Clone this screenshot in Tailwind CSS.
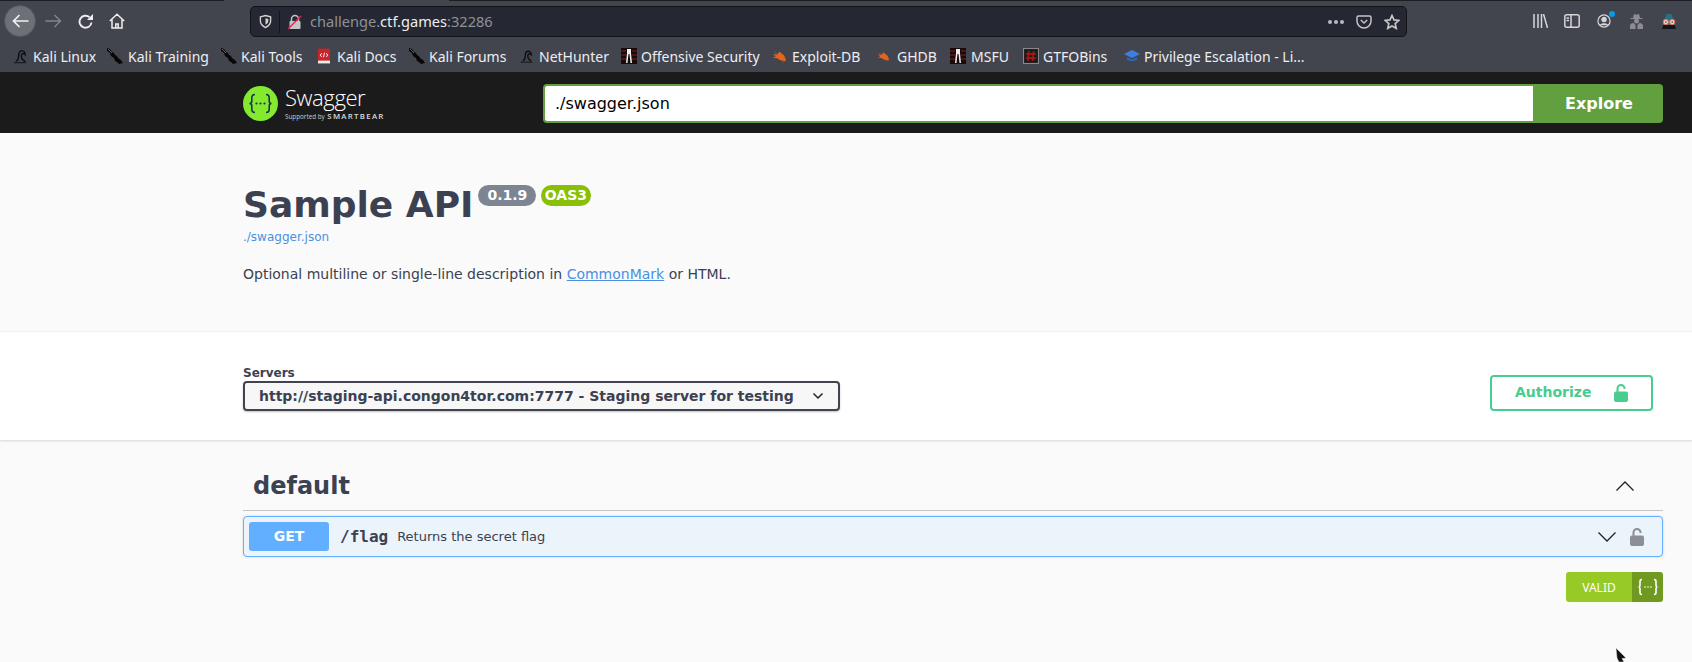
<!DOCTYPE html>
<html lang="en">
<head>
  <meta charset="UTF-8">
  <title>Swagger UI</title>
  <script src="https://cdn.jsdelivr.net/npm/@tailwindcss/browser@4"></script>
</head>
<body class="bg-[#fafafa] h-[662px] w-[1692px] overflow-hidden relative font-['DejaVu_Sans',sans-serif]">
  <svg class="hidden">
    <symbol id="knife" viewBox="0 0 16 16"><path d="M0 0l3 1 2 3 2 1 1 2 2 1 1 2 3 2 2 3-4 1-2-2-2-1-1-3-3-2-1-3-3-2z" fill="#070707"/><path d="M1 1l4 4" stroke="#8a8a8a" stroke-width=".7"/></symbol>
    <symbol id="dragon" viewBox="0 0 16 16"><path d="M3 13c2.500-1 3-3 3-5.500C6 4 7.500 2 9.500 2 11.500 2 13 4 13 6c-1-1-2.500-1.500-3.500-.5-1 1-.5 4 .5 5.500l3 2.500" fill="none" stroke="#0c0d10" stroke-width="1.500"/><path d="M1 14.500h13" stroke="#1c1d21" stroke-width="1.400"/></symbol>
    <symbol id="offsec" viewBox="0 0 16 16"><rect width="16" height="16" fill="#1a0b0b"/><path d="M0 3h5M0 7h5M0 11h5M11 3h5M11 7h5M11 11h5" stroke="#5a1d1d" stroke-width="1.500"/><path d="M6 1h4v4l1 10H9.500L8.500 6h-1l-1 9H5l1-10z" fill="#eee"/></symbol>
    <symbol id="bug" viewBox="0 0 16 16"><path d="M1 5l4 1 3-3 5 4 2 5-1 1-5-1-3-2-5-1 3-1z" fill="#e8621a"/><path d="M3 3l3 3M11 13l2 2" stroke="#b34c12" stroke-width="1"/></symbol>
    <symbol id="lock-open" viewBox="0 0 14 18"><path d="M3.500 9V4.500a3.500 3.500 0 0 1 7 0V5" fill="none" stroke="currentColor" stroke-width="2"/><rect y="7.500" width="14" height="10.500" rx="2" fill="currentColor"/></symbol>
  </svg>

  <!-- browser chrome -->
  <div class="h-[73px] bg-[#42454e] border-b border-[#18191d] flex flex-col">
    <div class="h-[42px] flex items-center relative">
      <div class="absolute top-0 left-0 h-px w-[224px] bg-[#1d1e22]"></div>
      <div class="absolute top-0 left-[449px] right-0 h-px bg-[#1d1e22]"></div>
      <div class="w-[250px] flex items-center shrink-0 h-full">
        <div class="ml-[4px] w-[32px] h-[32px] rounded-full bg-[#6e7077] border border-[#55575f] flex items-center justify-center">
          <svg width="17" height="14" viewBox="0 0 17 14" fill="none" stroke="#f1f1f3" stroke-width="1.700"><path d="M16.500 7H1.500M7.500 1L1.500 7l6 6"/></svg>
        </div>
        <svg class="ml-[9px]" width="17" height="14" viewBox="0 0 17 14" fill="none" stroke="#83858b" stroke-width="1.400"><path d="M.5 7h15M9.500 1l6 6-6 6"/></svg>
        <svg class="ml-[16px]" width="15" height="15" viewBox="0 0 15 15" fill="none" stroke="#eeeef0" stroke-width="1.900"><path d="M13.500 8.500a6 6 0 1 1-2-5.300"/><path d="M15 0v6H9z" fill="#eeeef0" stroke="none"/></svg>
        <svg class="ml-[16px]" width="16" height="16" viewBox="0 0 16 16" fill="none" stroke="#eeeef0" stroke-width="1.500"><path d="M.8 8L8 1.200 15.200 8M3 6.500V15h10V6.500M6.800 15v-4h2.400v4"/></svg>
      </div>
      <div class="w-[1157px] h-[31px] mt-[1px] bg-[#252832] border border-[#121317] rounded-[5px] flex items-center shrink-0">
        <svg class="ml-[8px]" width="13" height="15" viewBox="0 0 14 15" fill="none" stroke="#d2d2d6" stroke-width="1.500"><path d="M1.500 2.500L7 1l5.500 1.500V7c0 3.500-2.500 5.500-5.500 7-3-1.500-5.500-3.500-5.500-7z"/><path d="M7 4l3 .8V7c0 1.800-1.200 3-3 4z" fill="#d2d2d6" stroke="none"/></svg>
        <div class="ml-[7px] w-px h-[22px] bg-[#14151a]"></div>
        <svg class="ml-[8px]" width="14" height="16" viewBox="0 0 14 16"><path d="M3.500 7V5a3.500 3.500 0 0 1 7 0v2" fill="none" stroke="#c5c5c9" stroke-width="1.500"/><rect x="1.500" y="7" width="11" height="8" rx="1" fill="#c5c5c9"/><path d="M0 15L13 2" stroke="#e22850" stroke-width="1.500"/></svg>
        <div class="ml-[8px] font-['Noto_Sans',sans-serif] text-[14.600px] text-[#8f9197] flex-1 leading-none">challenge.<span class="text-[#eeeef0]">ctf.games</span>:32286</div>
        <div class="flex items-center gap-[2px] mr-[12px]"><span class="w-[4px] h-[4px] rounded-full bg-[#b9b9be]"></span><span class="w-[4px] h-[4px] rounded-full bg-[#b9b9be]"></span><span class="w-[4px] h-[4px] rounded-full bg-[#b9b9be]"></span></div>
        <svg class="mr-[12px]" width="16" height="14" viewBox="0 0 16 14" fill="none" stroke="#c4c4c8" stroke-width="1.500"><path d="M1 2.500C1 1.500 1.700 1 2.500 1h11c.8 0 1.500.5 1.500 1.500V6a7 7 0 0 1-14 0z"/><path d="M4.800 5L8 8l3.200-3"/></svg>
        <svg class="mr-[6px]" width="16" height="16" viewBox="0 0 16 16" fill="none" stroke="#c4c4c8" stroke-width="1.700"><path d="M8 1.500l2 4.400 4.800.5-3.600 3.200 1 4.700L8 11.900l-4.200 2.400 1-4.700L1.200 6.400 6 5.900z"/></svg>
      </div>
      <div class="flex-1 flex items-center pl-[126px]">
        <svg width="15" height="14" viewBox="0 0 15 14" fill="none" stroke="#d6d6da" stroke-width="1.500"><path d="M1 0v14M5 0v14M8.500 0v14M10.500 0l4 14"/></svg>
        <svg class="ml-[16px]" width="16" height="14" viewBox="0 0 16 14" fill="none" stroke="#d6d6da" stroke-width="1.500"><rect x=".8" y=".8" width="14.400" height="12.400" rx="2"/><path d="M7 1v12M2.500 4H5M2.500 6.500H5"/></svg>
        <div class="relative ml-[17px]">
          <svg class="block" width="14" height="14" viewBox="0 0 15 15" fill="none" stroke="#d6d6da" stroke-width="1.300"><circle cx="7.500" cy="7.500" r="6.500"/><circle cx="7.500" cy="6" r="2.300" fill="#d6d6da"/><path d="M3.500 12c1-2 7-2 8 0" fill="#d6d6da"/></svg>
          <span class="absolute -top-[3px] -right-[4px] w-[6px] h-[6px] rounded-full bg-[#0a9be8]"></span>
        </div>
        <svg class="ml-[19px]" width="13" height="15" viewBox="0 0 13 15" fill="#8b8d92"><path d="M4 0l2.500.8L9 0l1 4h2.500v1H.5V4H3z"/><circle cx="6.500" cy="7" r="2.500"/><path d="M0 15v-3c0-2 1.500-3 3.500-3L5.500 11v4zM13 15v-3c0-2-1.500-3-3.500-3L7.500 11v4z"/></svg>
        <svg class="ml-[18px]" width="16" height="15" viewBox="0 0 16 15"><path d="M5.500 0h5l4.500 13H1z" fill="#2d6e84"/><path d="M1 15l1-4h12l1 4z" fill="#14141c"/><circle cx="4.800" cy="8" r="2.500" fill="#f3e4de" stroke="#e8704f" stroke-width="1.100"/><circle cx="11.200" cy="8" r="2.500" fill="#f3e4de" stroke="#e8704f" stroke-width="1.100"/><circle cx="4.800" cy="8" r=".8" fill="#222"/><circle cx="11.200" cy="8" r=".8" fill="#222"/></svg>
      </div>
    </div>
    <div class="flex-1 flex items-center pl-[13px] pb-[2px] text-[#eeeef2] text-[14px] font-['Noto_Sans',sans-serif] whitespace-nowrap">
      <div class="flex items-center gap-[5px] w-[94px]"><svg width="15" height="15"><use href="#dragon"/></svg>Kali Linux</div>
      <div class="flex items-center gap-[5px] w-[114px]"><svg width="16" height="16"><use href="#knife"/></svg>Kali Training</div>
      <div class="flex items-center gap-[4px] w-[97px]"><svg width="16" height="16"><use href="#knife"/></svg>Kali Tools</div>
      <div class="flex items-center gap-[7px] w-[91px]"><svg width="12" height="16" viewBox="0 0 13 16"><rect width="13" height="16" fill="#c9252b"/><rect y="13" width="13" height="3" fill="#eee"/><path d="M4 5L2.500 7 4 9M9 5l1.500 2L9 9M7 4.500L6 9.500" stroke="#fff" fill="none"/></svg>Kali Docs</div>
      <div class="flex items-center gap-[4px] w-[111px]"><svg width="16" height="16"><use href="#knife"/></svg>Kali Forums</div>
      <div class="flex items-center gap-[5px] w-[101px]"><svg width="14" height="15"><use href="#dragon"/></svg>NetHunter</div>
      <div class="flex items-center gap-[4px] w-[151px]"><svg width="16" height="16"><use href="#offsec"/></svg>Offensive Security</div>
      <div class="flex items-center gap-[5px] w-[105px]"><svg width="15" height="15"><use href="#bug"/></svg>Exploit-DB</div>
      <div class="flex items-center gap-[7px] w-[73px]"><svg width="13" height="15"><use href="#bug"/></svg>GHDB</div>
      <div class="flex items-center gap-[5px] w-[73px]"><svg width="16" height="16"><use href="#offsec"/></svg>MSFU</div>
      <div class="flex items-center gap-[4px] w-[101px]"><svg width="16" height="16" viewBox="0 0 15 15"><rect x=".5" y=".5" width="14" height="14" fill="#1b1b1b" stroke="#888"/><path d="M5.500 3l-1 9M10 3l-1 9M3 5.500h9M3 9.500h9" stroke="#b01515" stroke-width="1.500"/></svg>GTFOBins</div>
      <div class="flex items-center gap-[4px]"><svg width="16" height="12" viewBox="0 0 16 12"><path d="M8 0l8 4-8 4-8-4z" fill="#3d7fe0"/><path d="M3 7v2.500c2 2 8 2 10 0V7L8 9.500z" fill="#2f64b5"/></svg>Privilege Escalation - Li...</div>
    </div>
  </div>

  <!-- swagger topbar -->
  <div class="h-[60px] bg-[#1b1b1b] flex items-center pl-[243px] pr-[29px]">
    <div class="w-[300px] flex items-center shrink-0">
      <svg width="35" height="35" viewBox="0 0 35 35" class="shrink-0"><circle cx="17.500" cy="17.500" r="17.500" fill="#85ea2d"/><g fill="none" stroke="#173647" stroke-width="1.600"><path d="M12 8.500c-2.500 0-3.200 1-3.200 3.500v3c0 1.500-.8 2.500-2.300 2.500 1.500 0 2.300 1 2.300 2.500v3c0 2.500.7 3.500 3.200 3.500"/><path d="M23 8.500c2.500 0 3.200 1 3.200 3.500v3c0 1.500.8 2.500 2.300 2.500-1.500 0-2.300 1-2.300 2.500v3c0 2.500-.7 3.500-3.200 3.500"/></g><g fill="#173647"><circle cx="13.500" cy="17.500" r="1.100"/><circle cx="17.500" cy="17.500" r="1.100"/><circle cx="21.500" cy="17.500" r="1.100"/></g></svg>
      <div class="ml-[7px] text-white leading-none">
        <div class="font-['Open_Sans',sans-serif] font-light text-[22px] tracking-[-.4px] leading-[24px] mt-[-1px]">Swagger</div>
        <div class="font-['Open_Sans',sans-serif] text-[6.300px] mt-[4px] whitespace-nowrap text-[#ccc]">Supported by <span class="ml-[1px] text-[7.800px] font-semibold tracking-[1.300px] text-[#ddd]">SMARTBEAR</span></div>
      </div>
    </div>
    <div class="flex-1 h-[39px] flex">
      <div class="flex-1 bg-white border-2 border-r-0 border-[#62a03f] rounded-l-[4px] pl-[10px] pt-[1px] flex items-center text-[16px] text-black">./swagger.json</div>
      <div class="w-[130px] bg-[#62a03f] rounded-r-[4px] pt-[1px] pl-[2px] flex items-center justify-center text-white font-bold text-[16px]">Explore</div>
    </div>
  </div>

  <!-- info -->
  <div class="h-[199px] pl-[243px] pr-[29px] border-b border-[#f3f3f3] text-[#3b4151]">
    <div class="pt-[49px] flex items-start">
      <h2 class="text-[36px] font-bold leading-[45px]">Sample API</h2>
      <span class="ml-[5px] mt-[3px] h-[21px] px-[9px] rounded-full bg-[#7d8492] text-white font-bold text-[14px] leading-[20px]">0.1.9</span>
      <span class="ml-[5px] mt-[3px] h-[21px] px-[3.500px] rounded-full bg-[#89bf04] text-white font-bold text-[14px] leading-[20px]">OAS3</span>
    </div>
    <a class="block text-[12px] text-[#4990e2] leading-[15px] mt-[3px]">./swagger.json</a>
    <p class="mt-[19px] text-[14px] leading-[20px]">Optional multiline or single-line description in <a class="text-[#4990e2] underline">CommonMark</a> or HTML.</p>
  </div>

  <!-- servers + authorize -->
  <div class="h-[108px] bg-white shadow-[0_1px_2px_rgba(0,0,0,.15)] relative pl-[243px] pr-[39px] flex items-start">
    <div class="pt-[34px]">
      <div class="text-[12px] font-bold text-[#3b4151] leading-[15px]">Servers</div>
      <div class="w-[597px] h-[30px] border-2 border-[#41444e] rounded-[4px] bg-[#f7f7f7] shadow-[0_1px_2px_rgba(0,0,0,.25)] flex items-center pl-[14px] pr-[14px] justify-between text-[14px] font-bold text-[#3b4151]">
        <span class="whitespace-nowrap">http://staging-api.congon4tor.com:7777 - Staging server for testing</span>
        <svg width="12" height="8" viewBox="0 0 12 8" fill="none" stroke="#222" stroke-width="1.500"><path d="M1.500 1.500L6 6l4.500-4.500"/></svg>
      </div>
    </div>
    <div class="ml-auto mt-[43px] w-[163px] h-[36px] border-2 border-[#49cc90] rounded-[4px] flex items-center pl-[23px] pb-[1px] text-[#49cc90] font-bold text-[14px]">
      <span>Authorize</span>
      <svg class="ml-[23px]" width="14" height="18"><use href="#lock-open"/></svg>
    </div>
  </div>

  <!-- operations -->
  <div class="pl-[243px] pr-[29px] pt-[24px] relative">
    <div class="h-[47px] border-b border-[#c4c5cb] flex items-center pl-[10px] pb-[3px] pr-[28px]">
      <h3 class="text-[24px] font-bold text-[#3b4151]">default</h3>
      <svg class="ml-auto" width="20" height="12" viewBox="0 0 20 12" fill="none" stroke="#222" stroke-width="1.300"><path d="M1.500 10.500L10 2l8.500 8.500"/></svg>
    </div>
    <div class="mt-[5px] h-[41px] bg-[#ebf3fb] border border-[#61affe] rounded-[4px] shadow-[0_0_3px_rgba(0,0,0,.15)] flex items-center pl-[5px] pr-[18px] text-[#3b4151]">
      <div class="w-[80px] h-[29px] bg-[#61affe] rounded-[3px] text-white font-bold text-[14px] flex items-center justify-center">GET</div>
      <span class="ml-[11px] font-['DejaVu_Sans_Mono',monospace] font-bold text-[16px]">/flag</span>
      <span class="ml-[9px] text-[13px]">Returns the secret flag</span>
      <svg class="ml-auto mr-[13px]" width="20" height="12" viewBox="0 0 20 12" fill="none" stroke="#222" stroke-width="1.300"><path d="M1.500 1.500L10 10l8.500-8.500"/></svg>
      <svg class="text-[#8b8f95]" width="14" height="18"><use href="#lock-open"/></svg>
    </div>
    <div class="mt-[15px] flex justify-end">
      <div class="w-[97px] h-[30px] rounded-[3px] overflow-hidden flex text-white text-[12px] font-['Noto_Sans',sans-serif]">
        <div class="w-[66px] bg-[#97ca26] flex items-center justify-center pt-[1px]">VALID</div>
        <div class="flex-1 bg-[#6f9a1f] flex items-center justify-center">
          <svg width="20" height="18" viewBox="0 0 20 18" fill="none" stroke="#fff" stroke-width="1.600"><path d="M4 1.500C2.500 1.500 2 2 2 3.500v3.500C2 8 1.500 9 .5 9c1 0 1.500 1 1.500 2v3.500c0 1.500.5 2 2 2M16 1.500c1.500 0 2 .5 2 2v3.500c0 1 .5 2 1.500 2-1 0-1.500 1-1.500 2v3.500c0 1.500-.5 2-2 2"/><path d="M6.500 9h1.200M9.400 9h1.200M12.300 9h1.200"/></svg>
        </div>
      </div>
    </div>
  </div>

  <!-- mouse cursor -->
  <svg class="absolute left-[1616px] top-[648px]" width="11" height="14" viewBox="0 0 11 14"><path d="M0 0l10 10-4 .5 2 3.500H3L1 10z" fill="#111" stroke="#ddd" stroke-width=".5"/></svg>
</body>
</html>
